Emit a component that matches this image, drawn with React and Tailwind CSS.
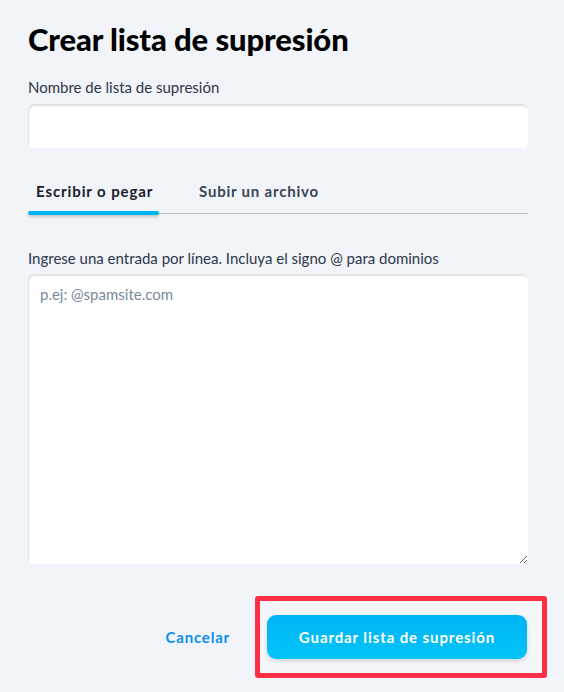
import React, { useState } from 'react'

export default function App() {
  const [tab, setTab] = useState('write')
  const [name, setName] = useState('')
  const [entries, setEntries] = useState('')

  return (
    <div className="min-h-screen w-full bg-[#f1f4f8] px-7 pt-[20px] font-['Lato',sans-serif] text-[#1f2937]">
      <h1 className="text-[31px] font-black leading-[38px] tracking-[-0.1px] text-black">Crear lista de supresión</h1>

      <label className="mt-[19px] block text-[15px] leading-5 text-[#2d3748]">Nombre de lista de supresión</label>
      <input
        type="text"
        value={name}
        onChange={e => setName(e.target.value)}
        className="mt-[7px] block h-[44px] w-[500px] rounded-md bg-white px-3 text-[15px] shadow-[inset_1px_2px_2px_rgba(0,0,0,0.12)] outline-none"
      />

      <div className="relative mt-[33px] flex w-[500px] border-b border-[#b8bec6]">
        <button
          onClick={() => setTab('write')}
          className="relative w-[131px] shrink-0 whitespace-nowrap pb-[12px] pl-2 text-left text-[15px] font-bold leading-5 tracking-[0.9px] text-[#1a202c]"
        >
          Escribir o pegar
          {tab === 'write' && (
            <span className="absolute bottom-[-2px] left-0 h-[4px] w-[131px] rounded-full bg-[#00b3f5] shadow-[0_2px_3px_rgba(0,0,0,0.2)]" />
          )}
        </button>
        <button
          onClick={() => setTab('upload')}
          className="relative ml-[40px] whitespace-nowrap pb-[12px] text-left text-[15px] font-bold leading-5 tracking-[0.8px] text-[#3b4556]"
        >
          Subir un archivo
          {tab === 'upload' && (
            <span className="absolute bottom-[-2px] left-0 h-[4px] w-full rounded-full bg-[#00b3f5] shadow-[0_2px_3px_rgba(0,0,0,0.2)]" />
          )}
        </button>
      </div>

      <label className="mt-[34px] block text-[15px] leading-5 text-[#2d3748]">Ingrese una entrada por línea. Incluya el signo @ para dominios</label>
      <textarea
        value={entries}
        onChange={e => setEntries(e.target.value)}
        placeholder="p.ej: @spamsite.com"
        className="mt-[6px] block h-[290px] w-[500px] rounded-md bg-white px-3 py-[10px] text-[15px] leading-5 shadow-[inset_1px_2px_2px_rgba(0,0,0,0.12)] outline-none placeholder:text-[#7a8a9c]"
      />

      <div className="mt-[32px] flex w-[519px] items-center justify-end">
        <button className="mr-[25px] text-[15px] font-bold tracking-[0.8px] text-[#0a8ff0]">Cancelar</button>
        <div className="rounded-[3px] border-[5px] border-[#fe2f45] bg-[#f4f6f9] py-[14px] pl-[7px] pr-[15px]">
          <button className="h-[44px] w-[260px] rounded-[9px] bg-gradient-to-b from-[#00b3f3] to-[#02c4f8] text-[15px] font-bold tracking-[0.9px] text-white shadow-[0_2px_4px_rgba(0,0,0,0.15)]">
            Guardar lista de supresión
          </button>
        </div>
      </div>
    </div>
  )
}
